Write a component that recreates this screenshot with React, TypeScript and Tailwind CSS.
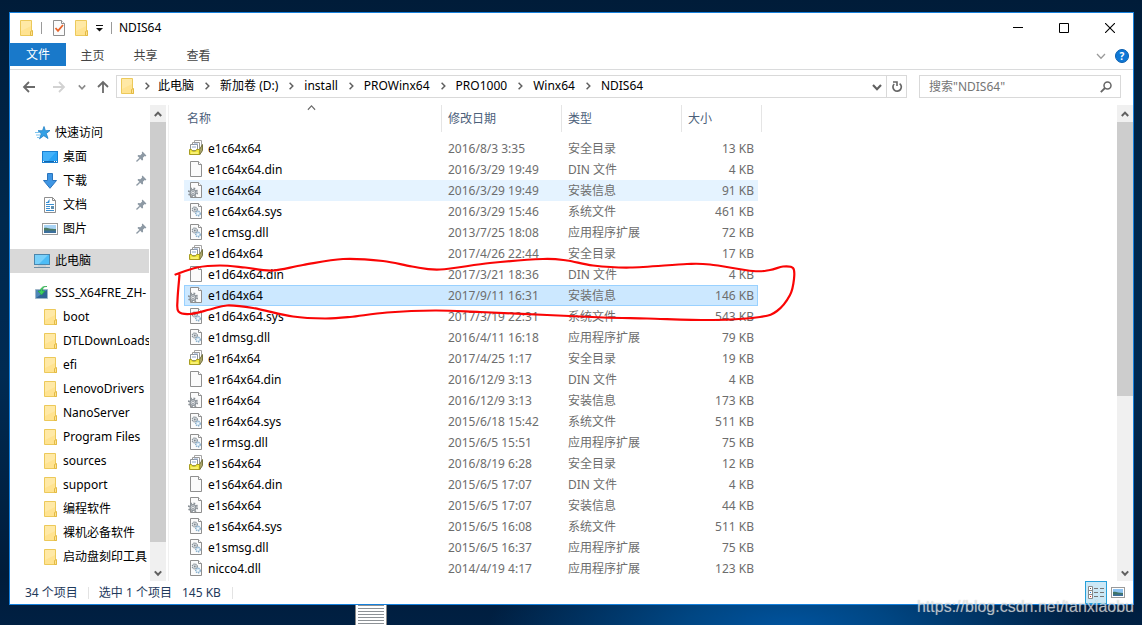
import React from "react";

type Kind = "cat" | "blank" | "inf" | "sys";

const TYPE_LABEL: Record<string, string> = {
  cat: "安全目录",
  din: "DIN 文件",
  inf: "安装信息",
  sys: "系统文件",
  dll: "应用程序扩展",
};

const ICON_FOR: Record<string, Kind> = { cat: "cat", din: "blank", inf: "inf", sys: "sys", dll: "sys" };

const FILES: [string, string, string, string][] = [
  ["e1c64x64", "2016/8/3 3:35", "cat", "13 KB"],
  ["e1c64x64.din", "2016/3/29 19:49", "din", "4 KB"],
  ["e1c64x64", "2016/3/29 19:49", "inf", "91 KB"],
  ["e1c64x64.sys", "2016/3/29 15:46", "sys", "461 KB"],
  ["e1cmsg.dll", "2013/7/25 18:08", "dll", "72 KB"],
  ["e1d64x64", "2017/4/26 22:44", "cat", "17 KB"],
  ["e1d64x64.din", "2017/3/21 18:36", "din", "4 KB"],
  ["e1d64x64", "2017/9/11 16:31", "inf", "146 KB"],
  ["e1d64x64.sys", "2017/3/19 22:31", "sys", "543 KB"],
  ["e1dmsg.dll", "2016/4/11 16:18", "dll", "79 KB"],
  ["e1r64x64", "2017/4/25 1:17", "cat", "19 KB"],
  ["e1r64x64.din", "2016/12/9 3:13", "din", "4 KB"],
  ["e1r64x64", "2016/12/9 3:13", "inf", "173 KB"],
  ["e1r64x64.sys", "2015/6/18 15:42", "sys", "511 KB"],
  ["e1rmsg.dll", "2015/6/5 15:51", "dll", "75 KB"],
  ["e1s64x64", "2016/8/19 6:28", "cat", "12 KB"],
  ["e1s64x64.din", "2015/6/5 17:07", "din", "4 KB"],
  ["e1s64x64", "2015/6/5 17:07", "inf", "44 KB"],
  ["e1s64x64.sys", "2015/6/5 16:08", "sys", "511 KB"],
  ["e1smsg.dll", "2015/6/5 16:37", "dll", "75 KB"],
  ["nicco4.dll", "2014/4/19 4:17", "dll", "123 KB"],
];

const HOVERED = 2;
const SELECTED = 7;

const FOLDERS = [
  "boot", "DTLDownLoads", "efi", "LenovoDrivers", "NanoServer", "Program Files",
  "sources", "support", "编程软件", "裸机必备软件", "启动盘刻印工具",
];

const CRUMBS = ["此电脑", "新加卷 (D:)", "install", "PROWinx64", "PRO1000", "Winx64", "NDIS64"];

function FolderIcon() {
  return (
    <svg width="14" height="16" viewBox="0 0 14 16" className="shrink-0">
      <path d="M.5.5h11v11h1v4H.5z" fill="#ffe391" stroke="#ecc95a" />
      <path d="M1 1h10v5L1 11z" fill="#ffe9a6" />
      <path d="M10.5 15.5v-4l2-1v5z" fill="#ffe391" stroke="#e3ba45" />
    </svg>
  );
}

function Page() {
  return (
    <>
      <path d="M1.5.5h8l3 3v12h-11z" fill="#fbfbfb" stroke="#8f8f8f" />
      <path d="M9.5.5v3h3" fill="#fff" stroke="#8f8f8f" />
    </>
  );
}

function Cog() {
  return (
    <>
      <circle cx="5.5" cy="10.5" r="4.2" fill="none" stroke="#8b9298" strokeWidth="1.8" strokeDasharray="1.7 1.6" />
      <circle cx="5.5" cy="10.5" r="2.9" fill="#d6dade" stroke="#8b9298" strokeWidth="1.2" />
      <circle cx="5.5" cy="10.5" r="1.2" fill="#fff" stroke="#8b9298" strokeWidth=".8" />
    </>
  );
}

function FileIcon({ kind }: { kind: Kind }) {
  return (
    <svg width="16" height="16" viewBox="0 0 16 16" className="mb-px shrink-0 overflow-visible">
      {kind === "cat" && (
        <>
          <path d="M6.5.5h7v8h-7z" fill="#fff" stroke="#a5a5a5" />
          <path d="M4.5 2.5h7v7h-7z" fill="#fff" stroke="#9a9a9a" />
          <path d="M2.5 4.5h7v6h-7z" fill="#fff" stroke="#8e9398" />
          <path d="M4 7h4M6 4h4" stroke="#8aa4cc" />
          <path d="M11.5 9.5 14.5 4.5v6l-3 4.5z" fill="#a9a468" stroke="#75723f" />
          <path d="M1.5 9.5h2l1 1.500h3l1-1.500h3v5H1.500z" fill="#f2e83e" stroke="#a89d22" />
          <path d="M3 13h7" stroke="#fff9a8" />
        </>
      )}
      {kind === "blank" && <g transform="translate(1 0)"><Page /></g>}
      {kind === "inf" && (
        <>
          <g transform="translate(1 0)"><Page /></g>
          <g transform="translate(-.5 0)"><Cog /></g>
        </>
      )}
      {kind === "sys" && (
        <g transform="translate(1 0)">
          <Page />
          <circle cx="5.8" cy="6.5" r="2.5" fill="#dfe3e6" stroke="#8b949b" strokeWidth="1.3" strokeDasharray="1.3 .7" />
          <circle cx="5.8" cy="6.5" r=".9" fill="#7e868d" />
          <circle cx="9" cy="10.5" r="2.3" fill="#d5e7f4" stroke="#85abc8" strokeWidth="1.3" strokeDasharray="1.3 .7" />
          <circle cx="9" cy="10.5" r=".8" fill="#fff" />
        </g>
      )}
    </svg>
  );
}

function Chevron({ dir, color = "#606060", size = 8, weight = 1.6 }: { dir: "up" | "down" | "right"; color?: string; size?: number; weight?: number }) {
  const d = dir === "up" ? "M.8 6 4 2.6 7.2 6" : dir === "down" ? "M.8 2.4 4 5.8 7.2 2.4" : "M2.6.8 5.8 4 2.6 7.2";
  return (
    <svg width={size} height={size} viewBox="0 0 8 8" className="shrink-0">
      <path d={d} fill="none" stroke={color} strokeWidth={weight} />
    </svg>
  );
}

function Arrow({ kind, color }: { kind: "left" | "right" | "up"; color: string }) {
  const d = {
    left: "M13 7H2M7 2 2 7l5 5",
    right: "M1 7h11M7 2l5 5-5 5",
    up: "M7 13V2M2 7l5-5 5 5",
  }[kind];
  return (
    <svg width="14" height="14" viewBox="0 0 14 14">
      <path d={d} fill="none" stroke={color} strokeWidth="1.8" />
    </svg>
  );
}

function PinIcon() {
  return (
    <svg width="11" height="11" viewBox="0 0 11 11" className="mb-px shrink-0">
      <path d="M6.5.6 10.400 4.500 9.400 5.400 8.700 5 6.900 6.800 7.100 9 6 9.600 1.500 5.100 2.200 4 4.400 4.200 6.100 2.400 5.800 1.500z" fill="#8d99a4" />
      <path d="M3.800 7.200.5 10.500" stroke="#8d99a4" strokeWidth="1.3" />
    </svg>
  );
}

function PictureIcon() {
  return (
    <svg width="16" height="12" viewBox="0 0 16 12" className="shrink-0">
      <rect x=".5" y=".5" width="15" height="11" fill="#fff" stroke="#9a9a9a" />
      <rect x="2" y="2" width="12" height="8" fill="#a9d4f5" />
      <path d="M2 5c3-1 5 1 12 1v2H2z" fill="#4c7a63" />
      <path d="M2 7.5h12V10H2z" fill="#3c6f9c" />
    </svg>
  );
}

const QUICK: { label: string; icon: React.ReactNode }[] = [
  {
    label: "桌面",
    icon: (
      <svg width="16" height="12" viewBox="0 0 16 12">
        <rect x=".5" y=".5" width="15" height="11" fill="#29a3f5" stroke="#1a7fd0" />
        <path d="M1 1h13L6 10H1z" fill="#44b2fa" />
        <path d="M1 10.5h14" stroke="#1266ad" />
        <path d="M1 10.5h1M12 10.5h1M14 10.5h1" stroke="#fff" />
      </svg>
    ),
  },
  {
    label: "下载",
    icon: (
      <svg width="16" height="16" viewBox="0 0 16 16">
        <path d="M5.5.5h5v7h4L8 15.300 1.500 7.500h4z" fill="#3f96e4" stroke="#2a74bd" />
      </svg>
    ),
  },
  {
    label: "文档",
    icon: (
      <svg width="14" height="16" viewBox="0 0 14 16">
        <path d="M1.5.5h8l3 3v12h-11z" fill="#fff" stroke="#8f8f8f" />
        <path d="M9.5.5v3h3" fill="none" stroke="#8f8f8f" />
        <path d="M3 5.5h3M3 7.5h8M3 9.5h4M3 11.5h4M3 13.5h8" stroke="#3b8fd2" />
        <path d="M8 9h3v3H8z" fill="#5d8fb0" />
        <path d="M4 5.5 6.5 2v3.500z" fill="#3b8fd2" />
      </svg>
    ),
  },
  { label: "图片", icon: <PictureIcon /> },
];

function ScrollBar({ thumb }: { thumb: string }) {
  return (
    <div className="flex w-4 shrink-0 flex-col bg-[#f0f0f0]">
      <button aria-label="向上滚动" className="flex h-[17px] items-center justify-center">
        <Chevron dir="up" weight={2} />
      </button>
      <div className={`${thumb} bg-[#cdcdcd]`} />
      <div className="flex-1" />
      <button aria-label="向下滚动" className="flex h-[17px] items-center justify-center">
        <Chevron dir="down" weight={2} />
      </button>
    </div>
  );
}

function TitleBar() {
  return (
    <header className="flex h-[30px] items-center">
      <div className="flex flex-1 items-center pl-[10px]">
        <FolderIcon />
        <span className="ml-[7px] h-3 w-px bg-[#9a9a9a]" />
        <button aria-label="属性" className="ml-[10px]">
          <svg width="14" height="16" viewBox="0 0 14 16">
            <Page />
            <path d="M3.5 8 6 10.8 11 5" fill="none" stroke="#e8632a" strokeWidth="1.8" />
          </svg>
        </button>
        <button aria-label="新建文件夹" className="ml-[9px]"><FolderIcon /></button>
        <button aria-label="自定义快速访问工具栏" className="ml-[7px]">
          <svg width="8" height="8" viewBox="0 0 8 8">
            <path d="M0 1.5h7" stroke="#111" />
            <path d="M0 4h7L3.5 7.500z" fill="#111" />
          </svg>
        </button>
        <span className="ml-[7px] h-3 w-px bg-[#9a9a9a]" />
        <h1 className="ml-[7px] text-[12px] text-black">NDIS64</h1>
      </div>
      <div className="flex self-stretch">
        <button aria-label="最小化" className="flex w-[46px] items-center justify-center">
          <svg width="10" height="10" viewBox="0 0 10 10"><path d="M0 4.5h10" stroke="#000" /></svg>
        </button>
        <button aria-label="最大化" className="flex w-[46px] items-center justify-center">
          <svg width="10" height="10" viewBox="0 0 10 10"><path d="M.5.5h9v9h-9z" fill="none" stroke="#000" /></svg>
        </button>
        <button aria-label="关闭" className="flex w-[46px] items-center justify-center">
          <svg width="10" height="10" viewBox="0 0 10 10"><path d="M0 0l10 10M10 0 0 10" stroke="#000" strokeWidth="1.1" /></svg>
        </button>
      </div>
    </header>
  );
}

function Ribbon() {
  return (
    <div className="flex h-[27px] items-start border-b border-[#dadbdc]">
      <button className="h-[23px] w-14 bg-[#1979ca] text-white">文件</button>
      {["主页", "共享", "查看"].map((t) => (
        <button key={t} className="h-[26px] w-[53px] text-[#444]">{t}</button>
      ))}
      <div className="ml-auto flex h-[26px] items-center gap-[9px] pr-1">
        <button aria-label="展开功能区"><Chevron dir="down" color="#9a9a9a" size={10} weight={1} /></button>
        <button aria-label="帮助" className="flex size-[14px] items-center justify-center rounded-full border border-[#0a5eae] bg-[#0f78d6] text-[10px] leading-3 font-bold text-white">?</button>
      </div>
    </div>
  );
}

function AddressRow() {
  return (
    <div className="flex h-[35px] items-start pt-[5px] pr-3">
      <div className="flex h-6 w-[106px] shrink-0 items-center pl-3">
        <button aria-label="后退"><Arrow kind="left" color="#6b6b6b" /></button>
        <button aria-label="前进" className="ml-4"><Arrow kind="right" color="#d2d2d2" /></button>
        <button aria-label="最近浏览的位置" className="ml-3"><Chevron dir="down" color="#8a8a8a" /></button>
        <button aria-label="上移" className="ml-[10px]"><Arrow kind="up" color="#6b6b6b" /></button>
      </div>
      <nav aria-label="地址" className="flex h-[23px] min-w-0 flex-1 items-center border border-[#d9d9d9] pl-1 text-black">
        <div className="flex items-center pb-[2px]">
          <FolderIcon />
          {CRUMBS.map((c, i) => (
            <React.Fragment key={c}>
              <span className={i === 0 ? "flex w-[23px] justify-center" : "flex w-[26px] justify-center"}><Chevron dir="right" weight={1.5} /></span>
              <a href="#" className="whitespace-nowrap">{c}</a>
            </React.Fragment>
          ))}
        </div>
        <div className="ml-auto flex self-stretch">
          <button aria-label="以前的位置" className="flex w-[18px] items-center justify-center"><Chevron dir="down" size={10} weight={1.7} /></button>
          <button aria-label="刷新" className="flex w-5 items-center justify-center border-l border-[#d9d9d9]">
            <svg width="12" height="12" viewBox="0 0 12 12">
              <path d="M8.6 2.6A4.2 4.2 0 1 1 3.2 3" fill="none" stroke="#666" strokeWidth="1.7" />
              <path d="M2 1h4v4" fill="none" stroke="#666" strokeWidth="1.6" />
            </svg>
          </button>
        </div>
      </nav>
      <div className="ml-3 flex h-[23px] w-[202px] shrink-0 items-center border border-[#d9d9d9] pr-2 pl-[9px]">
        <input aria-label="搜索" placeholder={'搜索"NDIS64"'} className="min-w-0 flex-1 bg-transparent text-[12px] outline-none placeholder:text-[#757575]" />
        <svg width="12" height="12" viewBox="0 0 12 12">
          <circle cx="7.5" cy="4.5" r="3.5" fill="none" stroke="#666" strokeWidth="1.5" />
          <path d="M5 7 .8 11.200" stroke="#666" strokeWidth="1.8" />
        </svg>
      </div>
    </div>
  );
}

function NavPane() {
  return (
    <nav aria-label="导航窗格" className="mr-px w-[139px] shrink-0 overflow-hidden pt-4 whitespace-nowrap text-black">
      <a href="#" className="flex h-6 items-center pl-[25px]">
        <svg width="16" height="14" viewBox="0 0 16 14" className="shrink-0">
          <path d="M9 .5 10.400 4.700 15 4.500 11.300 7.500 13 12.500 8.800 9.700 4.500 12.800 6.300 7.700 3 4.700h4.500z" fill="#35a1e6" stroke="#1f7fc4" strokeWidth=".8" />
          <path d="M0 6.5h4M1 9h4M2 11.5h2" stroke="#7cc4ee" />
        </svg>
        <span className="ml-1">快速访问</span>
      </a>
      {QUICK.map((q) => (
        <a href="#" key={q.label} className="flex h-6 items-center pr-[2px] pl-8">
          <span className="flex w-4 justify-center">{q.icon}</span>
          <span className="ml-[5px] flex-1">{q.label}</span>
          <PinIcon />
        </a>
      ))}
      <a href="#" aria-current="true" className="my-2 flex h-6 items-center bg-[#d9d9d9] pl-6">
        <svg width="16" height="15" viewBox="0 0 16 15" className="shrink-0">
          <rect x=".5" y=".5" width="15" height="10" fill="#4cbcf6" stroke="#4a86ad" />
          <path d="M1 1h13L5 10H1z" fill="#79d0fa" />
          <path d="M0 13.5h16" stroke="#6f8ea4" />
          <path d="M4 12h8" stroke="#b9c7d1" />
        </svg>
        <span className="ml-[5px]">此电脑</span>
      </a>
      <a href="#" className="flex h-6 items-center pl-[25px]">
        <svg width="14" height="13" viewBox="0 0 14 13" className="mb-px shrink-0">
          <path d="M.5 3.5h12v9H.5z" fill="#4d87b8" stroke="#9fb6c8" />
          <path d="M1 12 12 4v8z" fill="#2f6595" />
          <path d="M12 .5C9 .5 7.500 1.500 7.500 5H10L6.500 9 3 5h2.500C5.500 1.500 8 0 12 .5z" fill="#3ed15f" stroke="#1f9e3e" strokeWidth=".6" />
        </svg>
        <span className="ml-[6px]">SSS_X64FRE_ZH-</span>
      </a>
      {FOLDERS.map((f) => (
        <a href="#" key={f} className="flex h-6 items-center pl-[34px]">
          <FolderIcon />
          <span className="ml-[5px]">{f}</span>
        </a>
      ))}
    </nav>
  );
}

const COLUMNS = ["名称", "修改日期", "类型", "大小"];

function FileTable() {
  return (
    <div className="flex-1 overflow-hidden pb-[2px] pl-[15px]">
      <table className="w-[578px] table-fixed border-separate border-spacing-0">
        <colgroup>
          <col className="w-[258px]" />
          <col className="w-[120px]" />
          <col className="w-[120px]" />
          <col className="w-[76px]" />
          <col className="w-1" />
        </colgroup>
        <thead>
          <tr className="h-[27px]">
            {COLUMNS.map((c, i) => (
              <th key={c} scope="col" colSpan={i === 3 ? 2 : 1} className={`${i === 0 ? "pl-[3px]" : "pl-[6px]"} relative border-r border-[#e5e5e5] p-0 text-left font-normal text-[#4c607a]`}>
                <button>{c}</button>
                {i === 0 && (
                  <span className="absolute -top-[2px] left-[123px]"><Chevron dir="up" color="#6a6a6a" size={9} weight={1} /></span>
                )}
              </th>
            ))}
          </tr>
          <tr className="h-[6px]" />
        </thead>
        <tbody>
          {FILES.map(([name, date, type, size], i) => {
            const tone =
              i === SELECTED ? "border-y border-[#99d1ff] bg-[#cce8ff]" : i === HOVERED ? "bg-[#e5f3ff]" : "";
            const left = i === SELECTED ? "border-l pl-[3px]" : "pl-1";
            const right = i === SELECTED ? "border-r pr-[3px]" : "pr-1";
            return (
              <tr key={i} className="h-[21px] text-[#6d6d6d]">
                <td className={`${tone} ${left} py-0 text-black`}>
                  <span className="flex items-center gap-1 leading-4">
                    <FileIcon kind={ICON_FOR[type]} />
                    {name}
                  </span>
                </td>
                <td className={`${tone} py-0 pl-[6px] leading-4`}>{date}</td>
                <td className={`${tone} py-0 pl-[6px] leading-4`}>{TYPE_LABEL[type]}</td>
                <td className={`${tone} ${right} py-0 text-right leading-4`}>{size}</td>
              </tr>
            );
          })}
        </tbody>
      </table>
    </div>
  );
}

function StatusBar() {
  return (
    <footer className="flex h-[23px] items-center pr-[6px] pl-[15px] text-[#1e395b]">
      <span>34 个项目</span>
      <span className="ml-[10px] h-3 w-px bg-[#e3e3e3]" />
      <span className="ml-[10px]">选中 1 个项目</span>
      <span className="ml-[10px]">145 KB</span>
      <span className="ml-[11px] h-3 w-px bg-[#e3e3e3]" />
      <div className="ml-auto flex items-center gap-1 self-stretch">
        <button aria-label="详细信息" aria-pressed="true" className="flex w-[22px] items-center justify-center self-stretch border border-[#26a0da] bg-[#cbe8f6]">
          <svg width="16" height="13" viewBox="0 0 16 13">
            <path d="M.5.5h4v12h-4zM.5 4.500h4M.5 8.500h4" fill="#fff" stroke="#8a8a8a" />
            <path d="M6 2.500h4M12 2.500h4M6 6.500h4M12 6.500h4M6 10.500h4M12 10.500h4" stroke="#777" />
            <path d="M2 2.500h1" stroke="#555" />
            <path d="M2 6.500h1" stroke="#2a7fd0" />
            <path d="M2 10.500h1" stroke="#d02a2a" />
          </svg>
        </button>
        <button aria-label="大图标" className="flex w-4 justify-start pb-px">
          <svg width="14" height="11" viewBox="0 0 14 11">
            <rect x=".5" y=".5" width="13" height="10" fill="#fff" stroke="#9a9a9a" />
            <rect x="2" y="2" width="10" height="7" fill="#8cc3f2" />
            <path d="M2 5c3-1 5 1 10 1v3H2z" fill="#3f7468" />
            <path d="M2 7.500h10V9H2z" fill="#3c6f9c" />
          </svg>
        </button>
      </div>
    </footer>
  );
}

const LOOP: [number, number][] = [
  [175.5, 274.5], [197, 267.5], [220, 265.5], [245, 267.5], [272, 270.5], [303, 265], [343, 259], [383, 261],
  [412, 266.5], [440, 269.5], [490, 263], [543, 259], [567, 260.5], [593, 265.5], [630, 267.5], [687, 264],
  [710, 264.5], [753, 271], [770, 270], [783, 266.5], [793, 268], [794, 279], [790, 295], [777, 311],
  [760, 317], [713, 320], [647, 318.5], [603, 317.5], [547, 315], [480, 312], [435, 310.5], [387, 312.5],
  [350, 317], [325, 318.5], [293, 316.5], [253, 308], [227, 305.5], [210, 309.5], [190, 314], [178.5, 311.5],
  [177.5, 300], [179.5, 275],
];

function smoothPath(p: [number, number][]) {
  let d = `M${p[0][0]} ${p[0][1]}`;
  for (let i = 0; i < p.length - 1; i++) {
    const a = p[Math.max(i - 1, 0)];
    const b = p[i];
    const c = p[i + 1];
    const e = p[Math.min(i + 2, p.length - 1)];
    d += `C${b[0] + (c[0] - a[0]) / 6} ${b[1] + (c[1] - a[1]) / 6} ${c[0] - (e[0] - b[0]) / 6} ${c[1] - (e[1] - b[1]) / 6} ${c[0]} ${c[1]}`;
  }
  return d;
}

export default function App() {
  return (
    <div className="relative min-h-screen overflow-hidden bg-[radial-gradient(ellipse_300px_110px_at_69%_101%,#0054a0_0%,#004683_35%,transparent_100%),linear-gradient(180deg,#001c39_0%,#00284d_35%,#002a52_60%,#001c3a_92%,#002043_100%)] pt-3 pr-2 pl-[9px] font-['Noto_Sans','Noto_Sans_CJK_SC',sans-serif] text-[12px] leading-4">
      <main className="border border-[#1580dc] bg-white">
        <TitleBar />
        <Ribbon />
        <AddressRow />
        <div className="flex">
          <NavPane />
          <ScrollBar thumb="h-[420px]" />
          <div className="ml-[2px] w-px bg-[#f0f0f0]" />
          <FileTable />
          <ScrollBar thumb="h-[274px]" />
        </div>
        <StatusBar />
      </main>
      <div className="flex h-5 pl-[346px]">
        <div className="flex w-8 flex-col gap-[2px] border-x border-[#8a8a8a] bg-white px-[2px]">
          {[0, 1, 2, 3, 4, 5, 6].map((n) => (
            <span key={n} className="h-px w-full shrink-0 bg-[#8d9296]" />
          ))}
        </div>
      </div>
      <svg width="810" height="340" viewBox="0 0 810 340" className="pointer-events-none absolute top-0 left-0">
        <path d={smoothPath(LOOP)} fill="none" stroke="#fa0505" strokeWidth="2.2" strokeLinecap="round" strokeLinejoin="round" />
      </svg>
      <p className="pointer-events-none absolute right-2 bottom-2 font-['Liberation_Sans',Arial,sans-serif] text-[16px] leading-5 text-[#ffffffa0] [text-shadow:0_0_1px_#80808090]">
        https://blog.csdn.net/tanxiaobu
      </p>
    </div>
  );
}
